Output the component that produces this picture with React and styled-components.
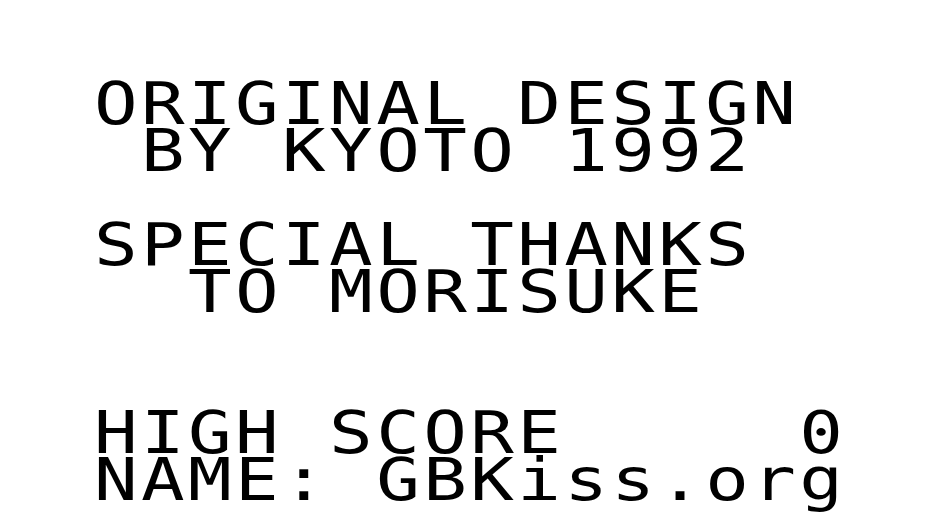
import React from 'react';
import styled, { createGlobalStyle } from 'styled-components';

const lines = [
    'ORIGINAL DESIGN',
    ' BY KYOTO 1992',
    '',
    'SPECIAL THANKS',
    '  TO MORISUKE',
    '',
    '',
    'HIGH SCORE     0',
    'NAME: GBKiss.org',
];

export default function App() {
    return (
        <>
            <Global />
            <Screen>
                {lines.map((text, i) => (
                    <Line key={i}>{text || '\u00a0'}</Line>
                ))}
            </Screen>
        </>
    );
}

const Global = createGlobalStyle`
    html, body {
        margin: 0;
        padding: 0;
        background: #fff;
    }
`;

const Screen = styled.div`
    width: 940px;
    height: 529px;
    overflow: hidden;
    box-sizing: border-box;
    padding: 81px 0 0 94px;
    display: flex;
    flex-direction: column;
    background: #fff;
    color: #000;
`;

const Line = styled.div`
    height: 47px;
    line-height: 47px;
    font-family: "DejaVu Sans Mono", monospace;
    font-size: 58px;
    letter-spacing: 2.7px;
    white-space: pre;
    transform: scaleX(1.25);
    transform-origin: left center;
`;
